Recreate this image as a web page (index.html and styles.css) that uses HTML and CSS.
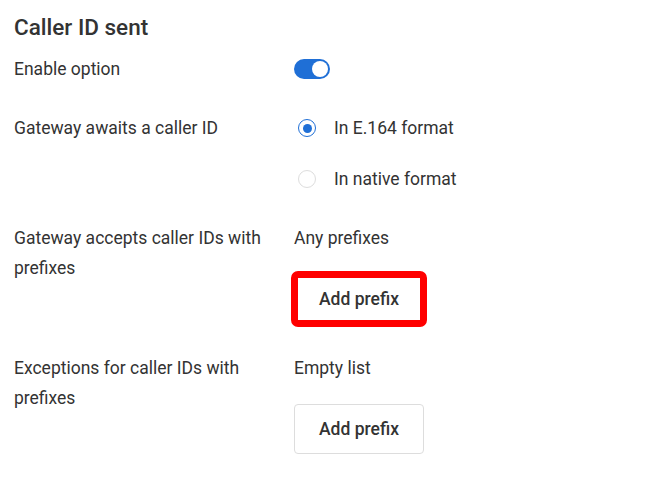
FILE: index.html
```html
<!DOCTYPE html>
<html lang="en">
<head>
  <meta charset="UTF-8">
  <title>Caller ID sent</title>
  <link rel="stylesheet" href="styles.css">
</head>
<body>
  <div class="section">
    <h2>Caller ID sent</h2>

    <div class="row">
      <div class="label">Enable option</div>
      <div class="value">
        <span class="toggle on"><span class="knob"></span></span>
      </div>
    </div>

    <div class="row">
      <div class="label">Gateway awaits a caller ID</div>
      <div class="value">
        <label class="radio"><span class="dot checked"></span>In E.164 format</label>
        <label class="radio"><span class="dot"></span>In native format</label>
      </div>
    </div>

    <div class="row">
      <div class="label">Gateway accepts caller IDs with prefixes</div>
      <div class="value">
        <div>Any prefixes</div>
        <button class="btn highlight">Add prefix</button>
      </div>
    </div>

    <div class="row">
      <div class="label">Exceptions for caller IDs with prefixes</div>
      <div class="value">
        <div>Empty list</div>
        <button class="btn">Add prefix</button>
      </div>
    </div>
  </div>
</body>
</html>
```

FILE: styles.css
```css
body {
  margin: 0;
  background: #fff;
  color: #333;
  font-family: Roboto, "Liberation Sans", Arial, sans-serif;
  font-size: 17.5px;
  line-height: 30px;
}
.section {
  padding: 12px 14px;
}
h2 {
  margin: 0 0 12px;
  font-size: 22.5px;
  font-weight: 500;
  line-height: 30px;
}
.row {
  display: flex;
  margin-bottom: 29px;
}
.label {
  width: 260px;
  padding-right: 20px;
}
.value {
  display: flex;
  flex-direction: column;
  align-items: flex-start;
  gap: 21px;
}
.toggle {
  display: flex;
  align-items: center;
  width: 36px;
  height: 20px;
  margin-top: 5px;
  border-radius: 10px;
  background: #1f6fd6;
  padding: 2px;
  box-sizing: border-box;
}
.toggle.on {
  justify-content: flex-end;
}
.knob {
  width: 16px;
  height: 16px;
  border-radius: 50%;
  background: #fff;
}
.radio {
  display: flex;
  align-items: center;
  cursor: pointer;
}
.dot {
  width: 18px;
  height: 18px;
  margin: 0 18px 0 4px;
  border: 1.5px solid #ddd;
  border-radius: 50%;
  box-sizing: border-box;
  display: flex;
  align-items: center;
  justify-content: center;
}
.dot.checked {
  border-color: #1f6fd6;
}
.dot.checked::after {
  content: "";
  width: 9px;
  height: 9px;
  border-radius: 50%;
  background: #1f6fd6;
}
.btn {
  width: 130px;
  height: 50px;
  border: 1px solid #ddd;
  border-radius: 4px;
  background: #fff;
  color: #333;
  font-family: inherit;
  font-size: 17.5px;
  font-weight: 500;
  cursor: pointer;
}
.btn.highlight {
  outline: 7px solid #f00;
  outline-offset: -4px;
}
```
